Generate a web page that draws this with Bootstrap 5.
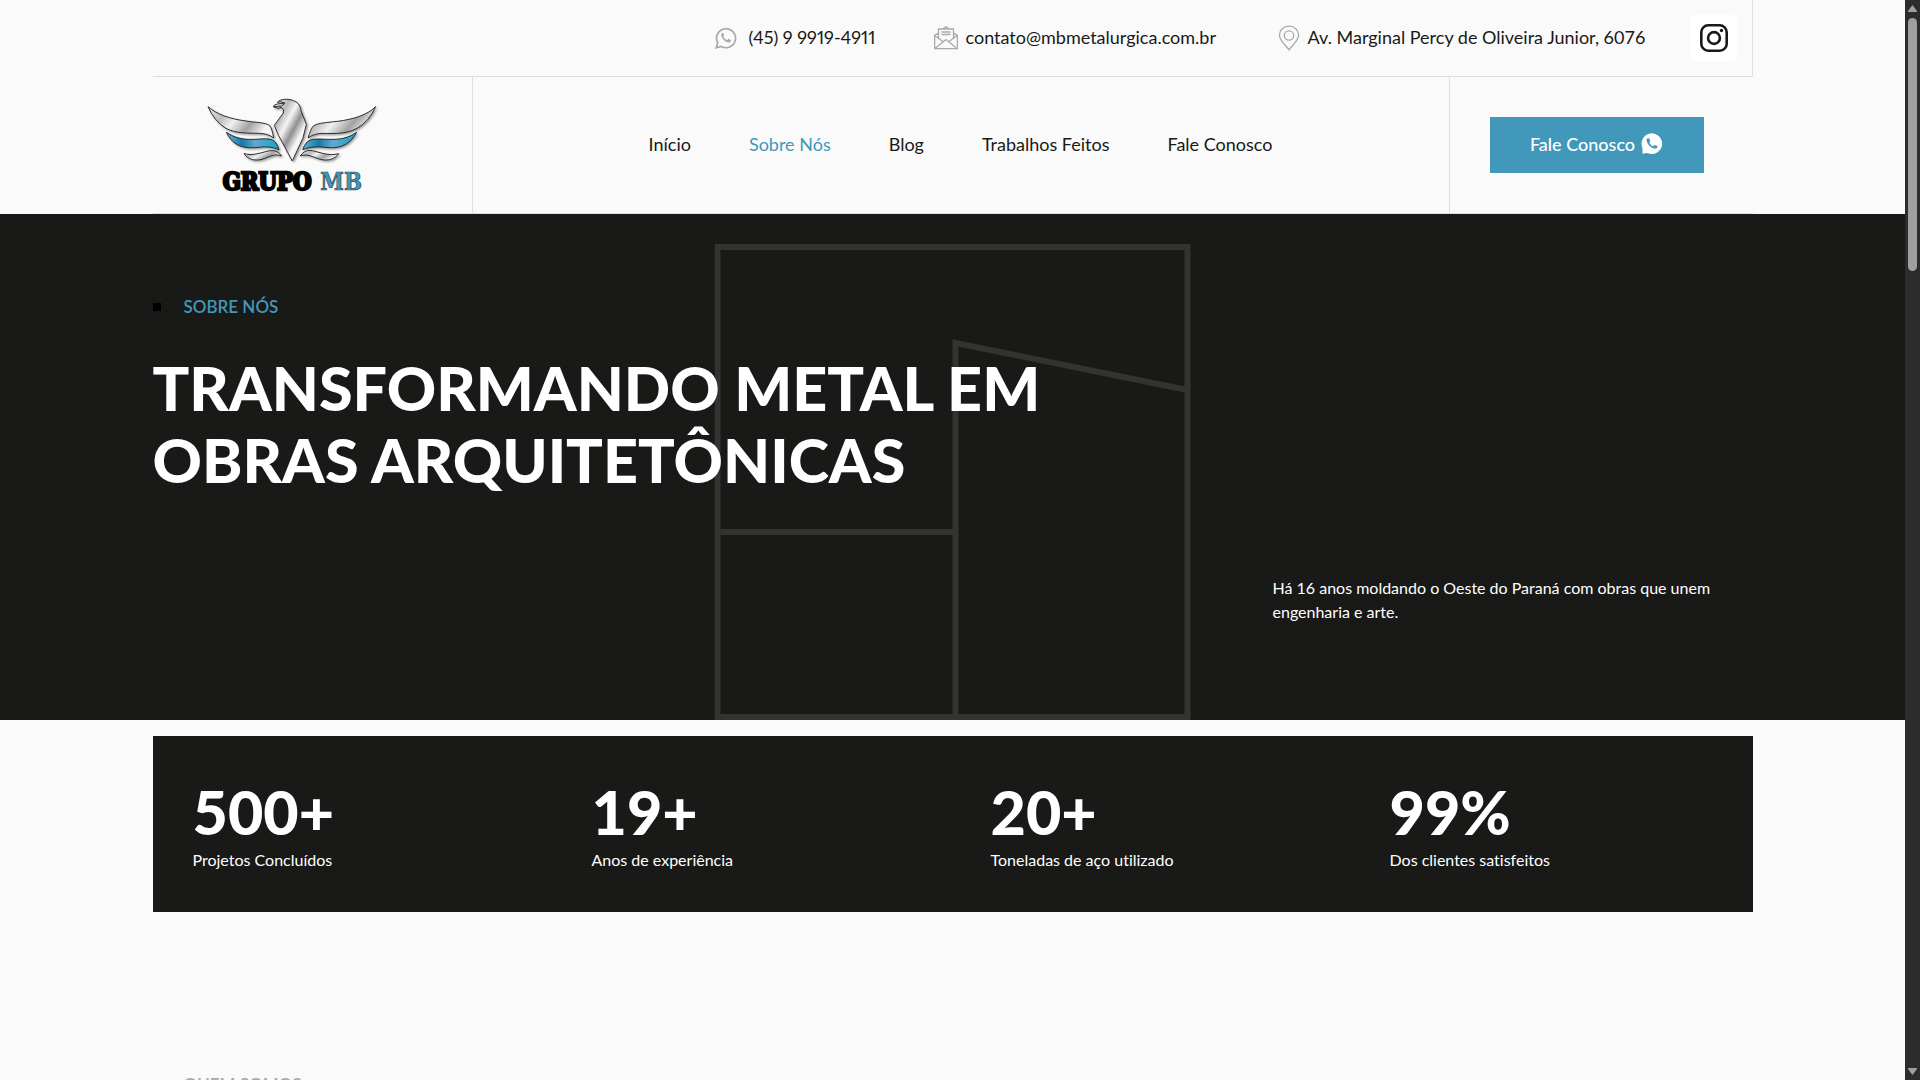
<!DOCTYPE html>
<html lang="pt-BR">
<head>
<meta charset="utf-8">
<meta name="viewport" content="width=device-width, initial-scale=1">
<title>Sobre Nós - Grupo MB</title>
<link href="https://cdn.jsdelivr.net/npm/bootstrap@5.3.0/dist/css/bootstrap.min.css" rel="stylesheet">
<style>
:root { --ink: #191917; --paper: #fafafa; --accent: #4198bb; --rule: #dfdfdd; --soft: #a9a9a5; }
body { font-family: Lato, "Open Sans", sans-serif; font-size: 18px; line-height: 28px; font-variant-ligatures: none; color: var(--ink); background: var(--paper); }
.viewport { height: 100vh; overflow: hidden; padding-right: 15px; }
.wrap { width: 100%; max-width: 1600px; margin: 0 auto; }
a { color: inherit; text-decoration: none; }
.topbar { min-height: 77px; padding-right: 15px; border-right: 1px solid var(--rule); border-bottom: 1px solid var(--rule); }
.contact-list { gap: 52px; margin-right: 40px; }
.contact-list span, .menu a { padding-bottom: 2px; }
.contact-phone { min-width: 167px; font-variant-numeric: proportional-nums; }
.contact-mail { min-width: 292px; }
.contact-place { min-width: 373px; }
.insta { width: 46px; height: 46px; background: #fff; border-radius: 4px; }
.mainbar { min-height: 137px; border-bottom: 1px solid var(--rule); }
.brand-cell { width: 320px; padding-left: 52px; border-right: 1px solid var(--rule); }
.brand-cell svg { overflow: visible; }
.cta-cell { width: 304px; padding-left: 40px; border-left: 1px solid var(--rule); }
.menu { gap: 58px; }
.menu .active { color: var(--accent); }
.cta { width: 214px; height: 56px; background: var(--accent); color: #fff; border-radius: 0; font-size: 18px; font-weight: 500; gap: 6px; padding-bottom: 8px; }
.cta:hover { background: #32809f; color: #fff; }
.hero { background: var(--ink); color: #fff; padding: 80px 0 96px; }
.hero-art { position: absolute; left: 50%; bottom: 0; transform: translateX(-50%); width: 477px; height: 476px; }
.eyebrow { gap: 23px; font-size: 17px; line-height: 26px; font-weight: 600; text-transform: uppercase; }
.eyebrow::before { content: ""; width: 8px; height: 8px; background: #000; }
.hero .eyebrow { color: var(--accent); }
.about .eyebrow { color: var(--soft); }
.about .eyebrow::before { background: transparent; }
.hero h1 { font-size: 61px; line-height: 72px; font-weight: 900; margin: 32px 0 80px; text-transform: uppercase; }
.lead-in { width: 30%; font-size: 16px; line-height: 24px; }
.stats { background: var(--ink); color: #fff; margin-top: 16px; padding: 40px; min-height: 176px; }
.stats .row { --bs-gutter-x: 76px; }
.figure-num { font-size: 61px; line-height: 72px; font-weight: 900; }
.figure-label { font-size: 16px; line-height: 24px; }
.about { padding-top: 160px; }
.scroll-track { position: fixed; top: 0; right: 0; bottom: 0; width: 15px; background: #2c2c2c; padding: 5px 3px; }
.scroll-thumb { width: 9px; height: 253px; border-radius: 5px; background: #9f9f9f; margin-top: 6px; }
</style>
<script src="https://cdn.jsdelivr.net/npm/bootstrap@5.3.0/dist/js/bootstrap.bundle.min.js"></script>
</head>
<body>
<div class="viewport">
<header>
  <div class="wrap topbar d-flex align-items-center justify-content-end">
    <div class="contact-list d-flex align-items-center">
      <a href="#" class="contact-phone d-flex align-items-center">
        <svg width="22" height="22" viewBox="0 0 22 22" fill="none" stroke="#a9a9a5" stroke-width="1.7" class="me-2 flex-shrink-0"><path d="M1.3 20.7l1.4-5A9.5 9.5 0 1 1 6.300 19.400z"/><path d="M7.800 5.800c-1.300.5-1.900 1.800-1.400 3.200 1 3.100 3.300 5.400 6.600 6.500 1.500.4 2.700-.4 3-1.900v-.5l-2.700-1.300-1.200 1.400c-1.700-.7-3-1.900-3.900-3.600l1-1.200-1-2.600z" fill="#a9a9a5" stroke="none"/></svg>
        <span class="ms-1">(45) 9 9919-4911</span></a>
      <a href="#" class="contact-mail d-flex align-items-center">
        <svg width="24" height="24" viewBox="0 0 24 24" fill="none" stroke="#a9a9a5" stroke-width="1.300" class="me-2 flex-shrink-0"><path d="M4.500 7L.6 9.500v13.200h22.800V9.500L19.500 7M9 3l3-2.400L15 3M4.500 12V3h15v9M7.500 6h9M7.500 8.500h9M.6 9.500L9 15.500M23.400 9.500L15 15.500M.6 22.700L12 13.500l11.400 9.200"/></svg>
        <span>contato@mbmetalurgica.com.br</span></a>
      <a href="#" class="contact-place d-flex align-items-center">
        <svg width="22" height="26" viewBox="0 0 22 26" fill="none" stroke="#a9a9a5" stroke-width="1.300" class="me-2 flex-shrink-0"><path d="M11 24.800C8 20.500 1.400 15.500 1.400 10.200a9.600 9.100 0 0 1 19.200 0C20.600 15.500 14 20.500 11 24.800z"/><circle cx="11" cy="10.500" r="4.700"/></svg>
        <span>Av. Marginal Percy de Oliveira Junior, 6076</span></a>
    </div>
    <a href="#" class="insta d-flex align-items-center justify-content-center" aria-label="Instagram">
      <svg width="28" height="28" viewBox="0 0 28 28" fill="none" stroke="#191917" stroke-width="2.600"><rect x="1.300" y="1.300" width="25.400" height="25.400" rx="7"/><circle cx="14" cy="14" r="5.900"/><circle cx="21.500" cy="6.500" r="1.700" fill="#191917" stroke="none"/></svg>
    </a>
  </div>
  <div class="wrap mainbar d-flex">
    <a href="#" class="brand-cell d-flex align-items-center flex-shrink-0" aria-label="Grupo MB">
      <svg width="175" height="97" viewBox="195 80 525 291">
        <defs>
          <linearGradient id="steel" x1="0" y1="0" x2="1" y2="1"><stop offset="0" stop-color="#fff"/><stop offset=".25" stop-color="#b9b9b9"/><stop offset=".4" stop-color="#f4f4f4"/><stop offset=".55" stop-color="#8f8f8f"/><stop offset=".7" stop-color="#f7f7f7"/><stop offset="1" stop-color="#d5d5d5"/></linearGradient>
          <linearGradient id="wing" x1="0" y1="0" x2="1" y2=".4"><stop offset="0" stop-color="#eee"/><stop offset=".3" stop-color="#bbb"/><stop offset=".5" stop-color="#f1f1f1"/><stop offset=".75" stop-color="#a2a2a2"/><stop offset="1" stop-color="#f6f6f6"/></linearGradient>
          <linearGradient id="blue"><stop offset="0" stop-color="#5fb4d0"/><stop offset=".3" stop-color="#1878a8"/><stop offset=".55" stop-color="#63a8cc"/><stop offset="1" stop-color="#10a5cc"/></linearGradient>
          <filter id="shade" x="-10%" y="-10%" width="120%" height="130%"><feDropShadow dx="4" dy="4" stdDeviation="3" flood-opacity=".4"/></filter>
        </defs>
        <g stroke="#242424" stroke-width="2.800" stroke-linejoin="round" filter="url(#shade)">
          <path fill="url(#wing)" d="M204 109C230 132 270 146 318 152C351 157 375 156 389 166Q396 174 401 203Q384 189 356 189C320 188 288 190 258 174Q224 154 204 109z"/>
          <path fill="url(#blue)" d="M259 186C285 203 307 208 341 207C373 206 391 202 405 214Q414 224 417 239C395 227 371 229 345 232C300 235 276 220 259 186z"/>
          <path fill="url(#wing)" d="M312 250C342 258 367 245 390 241Q414 238 424 257C404 248 390 259 366 267C342 273 323 266 312 250z"/>
          <path fill="url(#wing)" d="M707 109C682 134 640 147 593 153C561 157 535 157 520 167Q513 174 504 203Q522 189 548 189C587 190 620 191 651 174Q687 154 707 109z"/>
          <path fill="url(#blue)" d="M650 186C625 203 600 208 568 207C537 207 516 202 501 215Q492 225 488 238C511 228 538 229 565 232C610 235 632 217 650 186z"/>
          <path fill="url(#wing)" d="M596 250C566 258 540 246 517 241Q493 237 481 257C503 249 516 259 541 267C565 273 584 266 596 250z"/>
          <path fill="url(#steel)" d="M412 96C420 86 444 84 460 91C477 97 481 109 483 121L499 162L489 203L457 272L416 196L403 165L430 128Q434 117 424 111L414 114L400 109Q402 102 412 101L434 98L422 94z"/>
          <path fill="none" d="M400 109L424 107L435 99"/>
        </g>
        <text x="248" y="358" font-family="'DejaVu Serif Condensed','DejaVu Serif',serif" font-weight="700" font-size="71" fill="#000" stroke="#000" stroke-width="7">GRUPO</text>
        <text x="541" y="358" font-family="'DejaVu Serif Condensed','DejaVu Serif',serif" font-weight="700" font-size="71" fill="#4198bb" stroke="#24495c" stroke-width="2">MB</text>
      </svg>
    </a>
    <nav class="menu d-flex flex-grow-1 align-items-center justify-content-center">
      <a href="#">Início</a><a href="#" class="active" aria-current="page">Sobre Nós</a><a href="#">Blog</a><a href="#">Trabalhos Feitos</a><a href="#">Fale Conosco</a>
    </nav>
    <div class="cta-cell d-flex align-items-center flex-shrink-0">
      <button type="button" class="cta btn d-flex align-items-center justify-content-center">Fale Conosco
        <svg width="22" height="22" viewBox="0 0 22 22"><path fill="#fff" d="M1.500 20.700V15A10.300 10.300 0 1 1 6.500 20z"/><path fill="#4198bb" d="M6.800 5.300c-1.300.5-1.500 1.800-1 3.200 1.200 3.500 3.700 6 7.200 7.100 1.600.4 3.200-.6 3.600-2.200l-.1-.4-3.100-1-1.200 1.300c-1.700-.7-3-1.900-3.900-3.600l1-1.200-.9-3.100z"/></svg>
      </button>
    </div>
  </div>
</header>
<main>
  <section class="hero position-relative">
    <svg class="hero-art" viewBox="0 0 476 476" preserveAspectRatio="xMinYMin" fill="none" stroke="#333331" stroke-width="6" aria-hidden="true"><path d="M3 3h470v470H3zM6 288h232M241 476V99l232 47"/></svg>
    <div class="wrap position-relative">
      <div class="eyebrow d-flex align-items-center">Sobre Nós</div>
      <h1>Transformando metal em<br>obras arquitetônicas</h1>
      <p class="lead-in ms-auto mb-0">Há 16 anos moldando o Oeste do Paraná com obras que unem engenharia e arte.</p>
    </div>
  </section>
  <section class="wrap stats">
    <div class="row">
      <div class="col-3"><div class="figure-num">500+</div><div class="figure-label">Projetos Concluídos</div></div>
      <div class="col-3"><div class="figure-num">19+</div><div class="figure-label">Anos de experiência</div></div>
      <div class="col-3"><div class="figure-num">20+</div><div class="figure-label">Toneladas de aço utilizado</div></div>
      <div class="col-3"><div class="figure-num">99%</div><div class="figure-label">Dos clientes satisfeitos</div></div>
    </div>
  </section>
  <section class="wrap about"><div class="eyebrow d-flex align-items-center">Quem Somos</div></section>
</main>
</div>
<div class="scroll-track d-flex flex-column" aria-hidden="true">
  <svg width="9" height="7" viewBox="0 0 9 7"><path d="M4.500 0L9 6v1H0V6z" fill="#9f9f9f"/></svg>
  <div class="scroll-thumb"></div>
  <svg class="mt-auto" width="9" height="7" viewBox="0 0 9 7"><path d="M4.500 7L9 1V0H0v1z" fill="#9f9f9f"/></svg>
</div>
</body>
</html>
